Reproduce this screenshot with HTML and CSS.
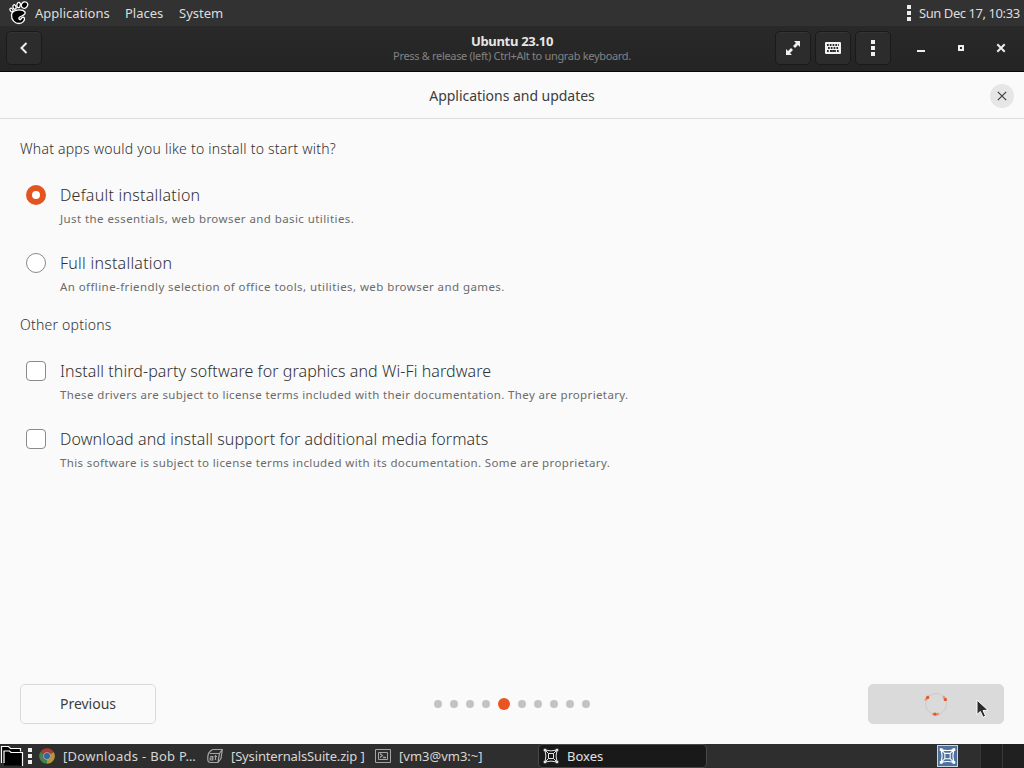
FILE: index.html
```
<!DOCTYPE html>
<html lang="en">
<head>
    <meta charset="UTF-8">
    <meta name="viewport" content="width=device-width, initial-scale=1.0">
    <title>Ubuntu 23.10 - Boxes</title>
    <link rel="stylesheet" href="styles.css">
</head>
<body>
    <!-- Boxes glyph, used twice in the taskbar -->
    <svg class="defs" width="0" height="0">
        <symbol id="boxes" viewBox="0 0 16 16">
            <path d="M2 2Q8 3.800 14 2Q12.200 8 14 14Q8 12.200 2 14Q3.800 8 2 2ZM5.500 5.500h5v5h-5ZM2 2l3.500 3.500M14 2l-3.500 3.500M14 14l-3.500-3.500M2 14l3.500-3.500" fill="none" stroke="currentColor" stroke-width="1"/>
            <path d="M.7.700h2.600v2.600H.700ZM12.700.700h2.600v2.600h-2.600ZM12.700 12.700h2.600v2.600h-2.600ZM.7 12.700h2.600v2.600H.700Z" fill="currentColor"/>
        </symbol>
    </svg>

    <!-- Top panel -->
    <div class="menubar">
        <svg class="foot" width="20" height="24" viewBox="0 0 20 24">
            <g fill="#000" stroke="#fff" stroke-width="1.300">
                <ellipse cx="15.500" cy="4" rx="3" ry="3.300" transform="rotate(35 15.500 4)"/>
                <ellipse cx="9.600" cy="4" rx="1.700" ry="2.700" transform="rotate(10 9.600 4)"/>
                <ellipse cx="5.500" cy="6" rx="1.500" ry="2.300" transform="rotate(-15 5.500 6)"/>
                <ellipse cx="2.500" cy="9" rx="1.300" ry="2" transform="rotate(-30 2.500 9)"/>
                <path d="M16 11C13 7.500 3 8.500 2.500 14C2.200 19 6 22.500 10 22.500C13.500 22.500 16.300 19.500 15.300 16.800C14.400 15.600 12.700 16.500 12 18C11 19.200 9.500 18.300 10 16.800C11 14.800 17.500 14.500 16 11Z"/>
            </g>
        </svg>
        <span class="menu menu-apps">Applications</span>
        <span class="menu menu-places">Places</span>
        <span class="menu menu-system">System</span>
        <span class="handle"></span>
        <span class="clock">Sun Dec 17, 10:33</span>
    </div>

    <!-- Window header bar -->
    <div class="headerbar">
        <div class="tool back">
            <svg width="16" height="16" viewBox="0 0 16 16"><path d="M10.500 3L5.500 8l5 5" fill="none" stroke="#eee" stroke-width="2"/></svg>
        </div>
        <div class="win-title">
            <div class="win-name">Ubuntu 23.10</div>
            <div class="win-hint">Press &amp; release (left) Ctrl+Alt to ungrab keyboard.</div>
        </div>
        <div class="tools">
            <div class="tool">
                <svg width="16" height="16" viewBox="0 0 16 16"><path d="M9 1h6v6l-2-2-3 3-2-2 3-3ZM7 15H1V9l2 2 3-3 2 2-3 3Z" fill="#eee"/></svg>
            </div>
            <div class="tool">
                <svg width="16" height="16" viewBox="0 0 16 16">
                    <rect y="2" width="16" height="12" rx="1" fill="#f2f2f2"/>
                    <path d="M2 5h12M3 8h11M2 11h2M5 11h6M12 11h2" stroke="#292929" stroke-width="1.800" stroke-dasharray="1.700 1.100"/>
                    <path d="M5 11h6" stroke="#292929" stroke-width="1.600"/>
                </svg>
            </div>
            <div class="tool"><span class="handle"></span></div>
        </div>
        <div class="win-controls">
            <svg width="16" height="16" viewBox="0 0 16 16"><path d="M4 11h8" stroke="#eee" stroke-width="2"/></svg>
            <svg width="16" height="16" viewBox="0 0 16 16"><path d="M6 6h4v4H6Z" fill="none" stroke="#eee" stroke-width="2"/></svg>
            <svg width="16" height="16" viewBox="0 0 16 16"><path d="M4.300 4.300l7.400 7.400M11.700 4.300l-7.400 7.400" stroke="#eee" stroke-width="2"/></svg>
        </div>
    </div>

    <!-- Installer -->
    <div class="page-header">
        <span class="page-title">Applications and updates</span>
        <div class="close">
            <svg width="10" height="10" viewBox="0 0 10 10"><path d="M.8.800l8.400 8.400M9.200.800L.8 9.200" stroke="#3d3d3d" stroke-width="1.200"/></svg>
        </div>
    </div>
    <div class="content">
        <p class="question q-apps">What apps would you like to install to start with?</p>
        <div class="option">
            <span class="radio checked"></span>
            <div>
                <div class="option-title t-default">Default installation</div>
                <div class="option-text d-default">Just the essentials, web browser and basic utilities.</div>
            </div>
        </div>
        <div class="option">
            <span class="radio"></span>
            <div>
                <div class="option-title t-full">Full installation</div>
                <div class="option-text d-full">An offline-friendly selection of office tools, utilities, web browser and games.</div>
            </div>
        </div>
        <p class="question q-other">Other options</p>
        <div class="option">
            <span class="checkbox"></span>
            <div>
                <div class="option-title t-drivers">Install third-party software for graphics and Wi-Fi hardware</div>
                <div class="option-text d-drivers">These drivers are subject to license terms included with their documentation. They are proprietary.</div>
            </div>
        </div>
        <div class="option">
            <span class="checkbox"></span>
            <div>
                <div class="option-title t-media">Download and install support for additional media formats</div>
                <div class="option-text d-media">This software is subject to license terms included with its documentation. Some are proprietary.</div>
            </div>
        </div>
    </div>
    <div class="footer">
        <div class="btn">Previous</div>
        <div class="dots">
            <i></i><i></i><i></i><i></i><i class="active"></i><i></i><i></i><i></i><i></i><i></i>
        </div>
        <div class="btn btn-busy">
            <svg width="26" height="26" viewBox="0 0 26 26">
                <circle cx="13" cy="13" r="10.500" fill="none" stroke="#cfcac8" stroke-width="1"/>
                <g fill="none" stroke="#f0936f" stroke-width="2.600">
                    <path d="M2.500 9.500Q3 7 6 5M20 5.500Q22.500 7 23 10M16 22.500Q13 24.300 9.500 22.800"/>
                </g>
                <g fill="#dc5630"><circle cx="4.600" cy="6.500" r="1.600"/><circle cx="22.300" cy="8.500" r="1.600"/><circle cx="12" cy="23" r="1.600"/></g>
            </svg>
            <svg class="cursor" width="14" height="20" viewBox="0 0 14 20"><path d="M1 1v14.500l3.400-3.100 2.600 5.900 2.600-1.200-2.600-5.600 5-.3Z" fill="#2b2b2b" stroke="#fff"/></svg>
        </div>
    </div>

    <!-- Bottom taskbar -->
    <div class="taskbar">
        <svg class="folder" width="24" height="24" viewBox="0 0 24 24" fill="#000" stroke="#fff" stroke-width="1.200"><path d="M1.500 19V2.500h7l2 2h10v3"/><path d="M4 21.500V7.500h5.500l1.500 1.500h11.500v12.500Z" stroke="none"/><path d="M4 19V7h5.500l1.500 1.500h11.500V22"/></svg>
        <span class="handle"></span>
        <div class="task task-chrome">
            <svg width="16" height="16" viewBox="0 0 16 16">
                <path d="M8 8L1.300 4A7.800 7.800 0 0 1 14.700 4Z" fill="#a83b32"/>
                <path d="M8 8L1.300 4A7.800 7.800 0 0 0 8 15.800Z" fill="#45814c"/>
                <path d="M8 8l6.700-4A7.800 7.800 0 0 1 8 15.800Z" fill="#b89536"/>
                <circle cx="8" cy="8" r="3.800" fill="#a8a8a8"/><circle cx="8" cy="8" r="3" fill="#36649e"/>
            </svg>
            <span>[Downloads - Bob P…</span>
        </div>
        <div class="task task-zip">
            <svg width="16" height="16" viewBox="0 0 16 16" fill="none" stroke="#a5a5a5" stroke-width="1.200">
                <path d="M.8 8Q1 5 4 2.500Q5 1.500 7 1.500h8.300L14 10.500l-3 4H3.500Q1 14.500.8 12ZM3 5.500h9.500l2-3M12.500 5.500L11 14"/><path d="M3.200 8.500h2.600v3.500H3.200v-2h2.600M8.500 7v5M7.500 8.500h2.500"/>
            </svg>
            <span>[SysinternalsSuite.zip ]</span>
        </div>
        <div class="task task-term">
            <svg width="16" height="16" viewBox="0 0 16 16" fill="none" stroke="#a5a5a5"><path d="M.5 1.500h15v13H.500ZM3.500 4.500h9v7h-9Z"/><path d="M5 5.500l2.300 2L5 9.500M8 9.500h3" stroke-width="1.300"/></svg>
            <span>[vm3@vm3:~]</span>
        </div>
        <div class="task task-active">
            <svg width="16" height="16"><use href="#boxes"/></svg>
            <span>Boxes</span>
        </div>
        <div class="workspaces">
            <div class="workspace current"><svg width="15" height="15"><use href="#boxes"/></svg></div>
            <div class="workspace"></div>
            <div class="workspace"></div>
        </div>
    </div>
</body>
</html>
```
FILE: styles.css
```
/* General Styles */
* {
    box-sizing: border-box;
}
body {
    margin: 0;
    width: 1024px;
    height: 768px;
    display: flex;
    flex-direction: column;
    overflow: hidden;
    background: #fafafa;
    color: #3d3d3d;
    font-family: "Noto Sans", sans-serif;
    font-size: 14px;
    white-space: nowrap;
}
svg {
    display: block;
    flex: none;
}
.defs {
    position: absolute;
}
.handle {
    flex: none;
    width: 4px;
    height: 16px;
    background: repeating-linear-gradient(#eee 0 4px, transparent 4px 6px);
}

/* Top panel */
.menubar {
    height: 26px;
    display: flex;
    align-items: center;
    padding: 0 4px 0 9px;
    background: #323232;
    color: #dedede;
    font-size: 13px;
}
.menu-apps {
    margin-left: 6px;
    width: 90px;
}
.menu-places {
    width: 54px;
}
.menubar .handle {
    margin-left: auto;
    margin-right: 8px;
}
.clock {
    width: 101px;
    letter-spacing: -0.43px;
}

/* Window header bar */
.headerbar {
    height: 46px;
    display: grid;
    grid-template-columns: 1fr auto 1fr;
    align-items: center;
    position: relative;
    padding: 0 6px 2px;
    background: linear-gradient(#292929, #242424);
    border-bottom: 1px solid #060606;
}
.tool {
    width: 36px;
    height: 34px;
    display: flex;
    align-items: center;
    justify-content: center;
    background: #2c2c2c;
    border: 1px solid #1a1a1a;
    border-radius: 5px;
    box-shadow: inset 0 1px #343434;
}
.win-title {
    text-align: center;
    line-height: 15px;
}
.win-name {
    padding-top: 1px;
    line-height: 14px;
    color: #e6e6e6;
    font-size: 13px;
    font-weight: 700;
    letter-spacing: -0.3px;
}
.win-hint {
    color: #828282;
    font-size: 11px;
    letter-spacing: -0.32px;
}
.tools {
    position: absolute;
    left: 775px;
    top: 5px;
    display: flex;
    gap: 4px;
}
.win-controls {
    display: flex;
    justify-content: flex-end;
    gap: 24px;
    padding-right: 9px;
}

/* Installer */
.page-header {
    height: 47px;
    display: flex;
    align-items: center;
    justify-content: center;
    position: relative;
    padding-top: 1px;
    border-bottom: 1px solid #dedede;
}
.page-title {
    letter-spacing: -0.03px;
}
.close {
    position: absolute;
    right: 10px;
    width: 24px;
    height: 24px;
    border-radius: 50%;
    display: flex;
    align-items: center;
    justify-content: center;
    background: #e6e6e6;
}
.content {
    flex: 1;
    padding: 20px;
}
.question {
    margin: 0 0 16px;
    line-height: 20px;
    font-weight: 300;
    color: #303030;
    letter-spacing: 0.23px;
}
.option {
    height: 68px;
    display: flex;
    gap: 14px;
    padding: 10px 6px;
}
.option-title {
    font-size: 16px;
    line-height: 20px;
    font-weight: 300;
    color: #303030;
    letter-spacing: 0.08px;
}
.t-default,
.t-full {
    letter-spacing: 0.24px;
}
.option-text {
    margin-top: 5px;
    font-size: 11.5px;
    line-height: 18px;
    color: #6b6b6b;
    letter-spacing: 0.37px;
}
.d-default,
.d-full {
    letter-spacing: 0.42px;
}
.q-other {
    margin-top: 4px;
}
.radio,
.checkbox {
    flex: none;
    width: 20px;
    height: 20px;
    background: #fff;
    border: 1px solid #8a8a8a;
    border-radius: 4px;
}
.radio {
    border-radius: 50%;
}
.radio.checked {
    border: 6px solid #e35420;
}

/* Footer */
.footer {
    height: 60px;
    display: flex;
    justify-content: space-between;
    padding: 0 20px;
}
.btn {
    width: 136px;
    height: 40px;
    display: flex;
    align-items: center;
    justify-content: center;
    position: relative;
    padding-bottom: 1px;
    border: 1px solid #d9d9d9;
    border-radius: 5px;
}
.btn-busy {
    background: #dadada;
}
.cursor {
    position: absolute;
    left: 107px;
    top: 14px;
}
.dots {
    height: 40px;
    display: flex;
    align-items: center;
    gap: 8px;
}
.dots i {
    width: 8px;
    height: 8px;
    border-radius: 50%;
    background: #c3c3c3;
}
.dots .active {
    width: 12px;
    height: 12px;
    background: #e95420;
}

/* Bottom taskbar */
.taskbar {
    height: 24px;
    display: flex;
    align-items: center;
    background: #2e2e2e;
    color: #d6d6d6;
    font-size: 13px;
}
.taskbar .handle {
    margin: 0 7px 0 4px;
}
.task {
    height: 24px;
    display: flex;
    align-items: center;
    gap: 8px;
}
.task-chrome,
.task-zip {
    width: 168px;
}
.task-chrome {
    letter-spacing: 0.3px;
}
.task-zip {
    letter-spacing: -0.15px;
}
.task-term {
    width: 163px;
}
.task-active {
    width: 169px;
    padding-left: 4px;
    background: #191919;
    border: 1px solid #484848;
    border-radius: 4px;
    color: #e2e2e2;
}
.workspaces {
    display: flex;
    margin-left: auto;
}
.workspace {
    width: 22px;
    height: 24px;
    background: #202020;
    border-left: 1px solid #393939;
}
.workspace.current {
    width: 43px;
    background: none;
    border: 0;
}
.current svg {
    width: 21px;
    height: 22px;
    margin-top: 1px;
    padding: 1px;
    color: #fff;
    background: #4d719e;
    border: 1px solid #c9d4e2;
}
```
